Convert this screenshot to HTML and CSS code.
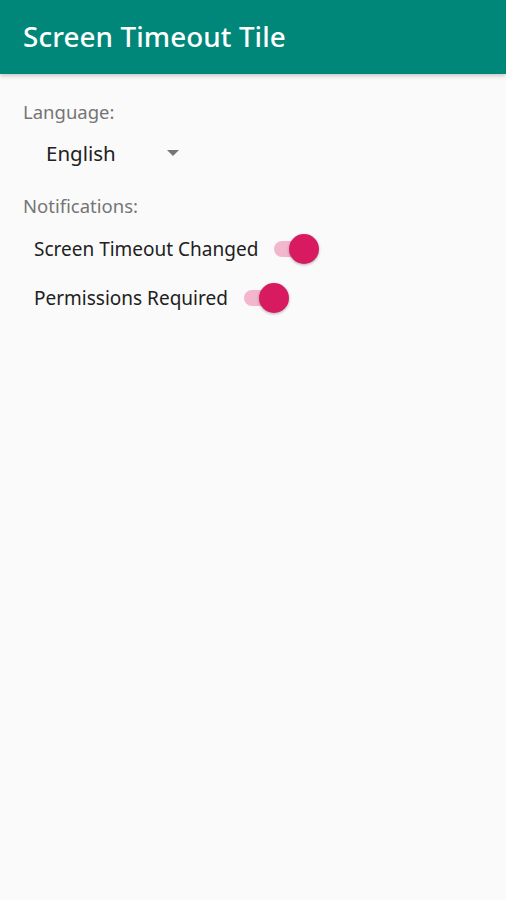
FILE: index.html
```html
<!DOCTYPE html>
<html lang="en">
<head>
  <meta charset="UTF-8" />
  <meta name="viewport" content="width=device-width, initial-scale=1.0"/>
  <title>Screen Timeout Tile</title>
  <link rel="stylesheet" href="styles.css">
</head>
<body>
  <header class="toolbar">
    <h1>Screen Timeout Tile</h1>
  </header>
  <main class="settings">
    <p class="label">Language:</p>
    <div class="spinner">
      <span class="spinner-value">English</span>
      <span class="spinner-arrow"></span>
    </div>
    <p class="label">Notifications:</p>
    <div class="switch-list">
      <div class="switch-row">
        <span class="switch-text">Screen Timeout Changed</span>
        <span class="switch on"><span class="thumb"></span></span>
      </div>
      <div class="switch-row">
        <span class="switch-text">Permissions Required</span>
        <span class="switch on"><span class="thumb"></span></span>
      </div>
    </div>
  </main>
</body>
</html>
```

FILE: styles.css
```css
* {
  box-sizing: border-box;
  font-family: 'Noto Sans', 'Open Sans', sans-serif;
}

body {
  margin: 0;
  padding: 0;
  background: #fafafa;
  height: 100vh;
}

.toolbar {
  background: #00877a;
  height: 74px;
  display: flex;
  align-items: center;
  padding: 0 23px 2px;
  box-shadow: 0 2px 4px rgba(0, 0, 0, 0.2);
}

.toolbar h1 {
  margin: 0;
  color: #fff;
  font-size: 27.8px;
  font-weight: 500;
  letter-spacing: 0.1px;
}

.settings {
  padding: 26px 23px;
}

.label {
  margin: 0;
  color: #757575;
  font-size: 18.5px;
  line-height: 24px;
}

.spinner {
  display: flex;
  align-items: center;
  height: 58px;
  padding-left: 23px;
  margin-bottom: 12px;
}

.spinner-value {
  color: #212121;
  font-size: 20.5px;
  width: 121px;
}

.spinner-arrow {
  width: 0;
  height: 0;
  border-left: 6px solid transparent;
  border-right: 6px solid transparent;
  border-top: 6px solid #757575;
}

.switch-list {
  margin-top: 6px;
}

.switch-row {
  display: flex;
  align-items: center;
  height: 49px;
  padding-left: 11px;
}

.switch-text {
  color: #212121;
  font-size: 19px;
  margin-right: 16px;
}

.switch {
  position: relative;
  width: 36px;
  height: 16px;
  border-radius: 8px;
  background: #f2b7cc;
}

.switch .thumb {
  position: absolute;
  right: -9px;
  top: -7px;
  width: 30px;
  height: 30px;
  border-radius: 50%;
  background: #d81b60;
  box-shadow: 0 1px 3px rgba(0, 0, 0, 0.3);
}
```
